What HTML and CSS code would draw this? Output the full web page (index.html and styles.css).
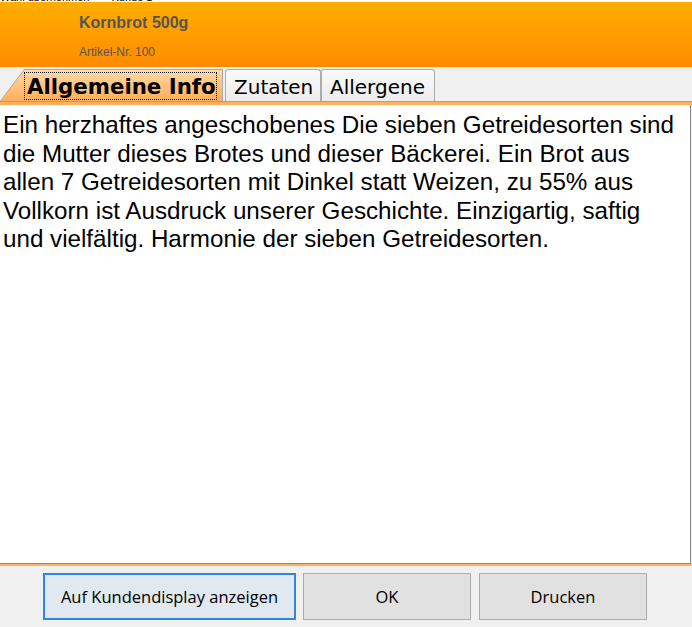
FILE: index.html
```html
<!DOCTYPE html>
<html lang="de">
<head>
<meta charset="utf-8">
<title>Kornbrot 500g</title>
<link rel="stylesheet" href="styles.css">
</head>
<body>
<div class="topstrip"><span class="ts-a">Wahl übernehmen</span><span class="ts-b">Kunde 1</span></div>
<header class="header">
  <div class="title">Kornbrot 500g</div>
  <div class="subtitle">Artikel-Nr. 100</div>
</header>
<nav class="tabs">
  <div class="tab tab-active"><span class="focus">Allgemeine Info</span></div>
  <div class="tab tab-zutaten">Zutaten</div>
  <div class="tab tab-allergene">Allergene</div>
</nav>
<div class="orange-line"></div>
<main class="panel">
  <p class="desc">Ein herzhaftes angeschobenes Die sieben Getreidesorten sind die Mutter dieses Brotes und dieser Bäckerei. Ein Brot aus allen 7 Getreidesorten mit Dinkel statt Weizen, zu 55% aus Vollkorn ist Ausdruck unserer Geschichte. Einzigartig, saftig und vielfältig. Harmonie der sieben Getreidesorten.</p>
</main>
<div class="orange-line thin"></div>
<footer class="buttons">
  <button class="btn btn-primary">Auf Kundendisplay anzeigen</button>
  <button class="btn btn-ok">OK</button>
  <button class="btn btn-print">Drucken</button>
</footer>
</body>
</html>
```
FILE: styles.css
```css
html, body {
  margin: 0;
  padding: 0;
}
body {
  width: 692px;
  height: 627px;
  overflow: hidden;
  background: #f0f0f0;
  font-family: "Liberation Sans", Arial, sans-serif;
}
.topstrip {
  height: 2px;
  overflow: hidden;
  background: #fff;
  font-size: 11px;
  line-height: 12px;
  color: #000;
  display: flex;
}
.ts-a, .ts-b {
  display: block;
  margin-top: -9px;
}
.ts-b {
  margin-left: 22px;
}
.header {
  height: 65px;
  box-sizing: border-box;
  padding: 12px 0 0 79px;
  background: linear-gradient(#ffae00, #ff8b00);
  color: #555;
}
.title {
  font-weight: bold;
  font-size: 16px;
  line-height: 18px;
}
.subtitle {
  margin-top: 13px;
  font-size: 12px;
  line-height: 14px;
}
.tabs {
  height: 35px;
  box-sizing: border-box;
  padding-top: 2px;
  display: flex;
  align-items: stretch;
  border-bottom: 1px solid #a0a0a0;
}
.tab {
  box-sizing: border-box;
  font-family: "DejaVu Sans", sans-serif;
  font-size: 20px;
  line-height: 30px;
  color: #000;
  background: linear-gradient(#fafafa, #ececec);
  border: 1px solid #acacac;
  border-bottom: none;
  border-radius: 3px 3px 0 0;
  padding: 2px 0 0 8px;
  overflow: hidden;
}
.tab-active {
  position: relative;
  width: 223px;
  padding: 0 0 0 24px;
  border: none;
  border-radius: 0;
  font-weight: bold;
  font-size: 21.3px;
  background: linear-gradient(#ffdaa6, #ffae5a);
  clip-path: polygon(24px 0, 100% 0, 100% 100%, 0 100%);
  border-top: 1px solid #a8a8a8;
  border-right: 1px solid #a8a8a8;
  white-space: nowrap;
}
.tab-active::before {
  content: "";
  position: absolute;
  left: 0;
  top: 0;
  width: 24px;
  height: 100%;
  background: linear-gradient(to top left, transparent calc(50% - 0.8px), #a8a8a8 50%, transparent calc(50% + 0.8px));
}
.focus {
  display: inline-block;
  line-height: 27px;
  margin-top: 2px;
  padding: 1px 1px 0 3px;
  outline: 1px dotted #000;
  outline-offset: -1px;
}
.tab-zutaten {
  width: 96px;
  margin-left: 2px;
}
.tab-allergene {
  width: 114px;
  margin-left: 0;
}
.orange-line {
  height: 3px;
  background: #ffb060;
}
.orange-line.thin {
  height: 2px;
}
.panel {
  width: 691px;
  height: 459px;
  box-sizing: border-box;
  background: #fff;
  border-right: 1px solid #8a8a8a;
  border-bottom: 1px solid #8a8a8a;
  padding: 6px 8px 0 3px;
}
.desc {
  margin: 0;
  font-size: 24.2px;
  line-height: 28.6px;
  color: #000;
}
.buttons {
  display: flex;
  gap: 7px;
  padding: 7px 0 0 43px;
}
.btn {
  height: 47px;
  box-sizing: border-box;
  font-family: "Open Sans", "Noto Sans", sans-serif;
  font-size: 16.5px;
  color: #000;
  background: #e1e1e1;
  border: 1px solid #adadad;
  border-radius: 0;
  padding: 0;
}
.btn-primary {
  width: 253px;
  background: #e1e8f0;
  border: 2px solid #2f86e0;
}
.btn-ok {
  width: 168px;
}
.btn-print {
  width: 168px;
  margin-left: 1px;
}
```
